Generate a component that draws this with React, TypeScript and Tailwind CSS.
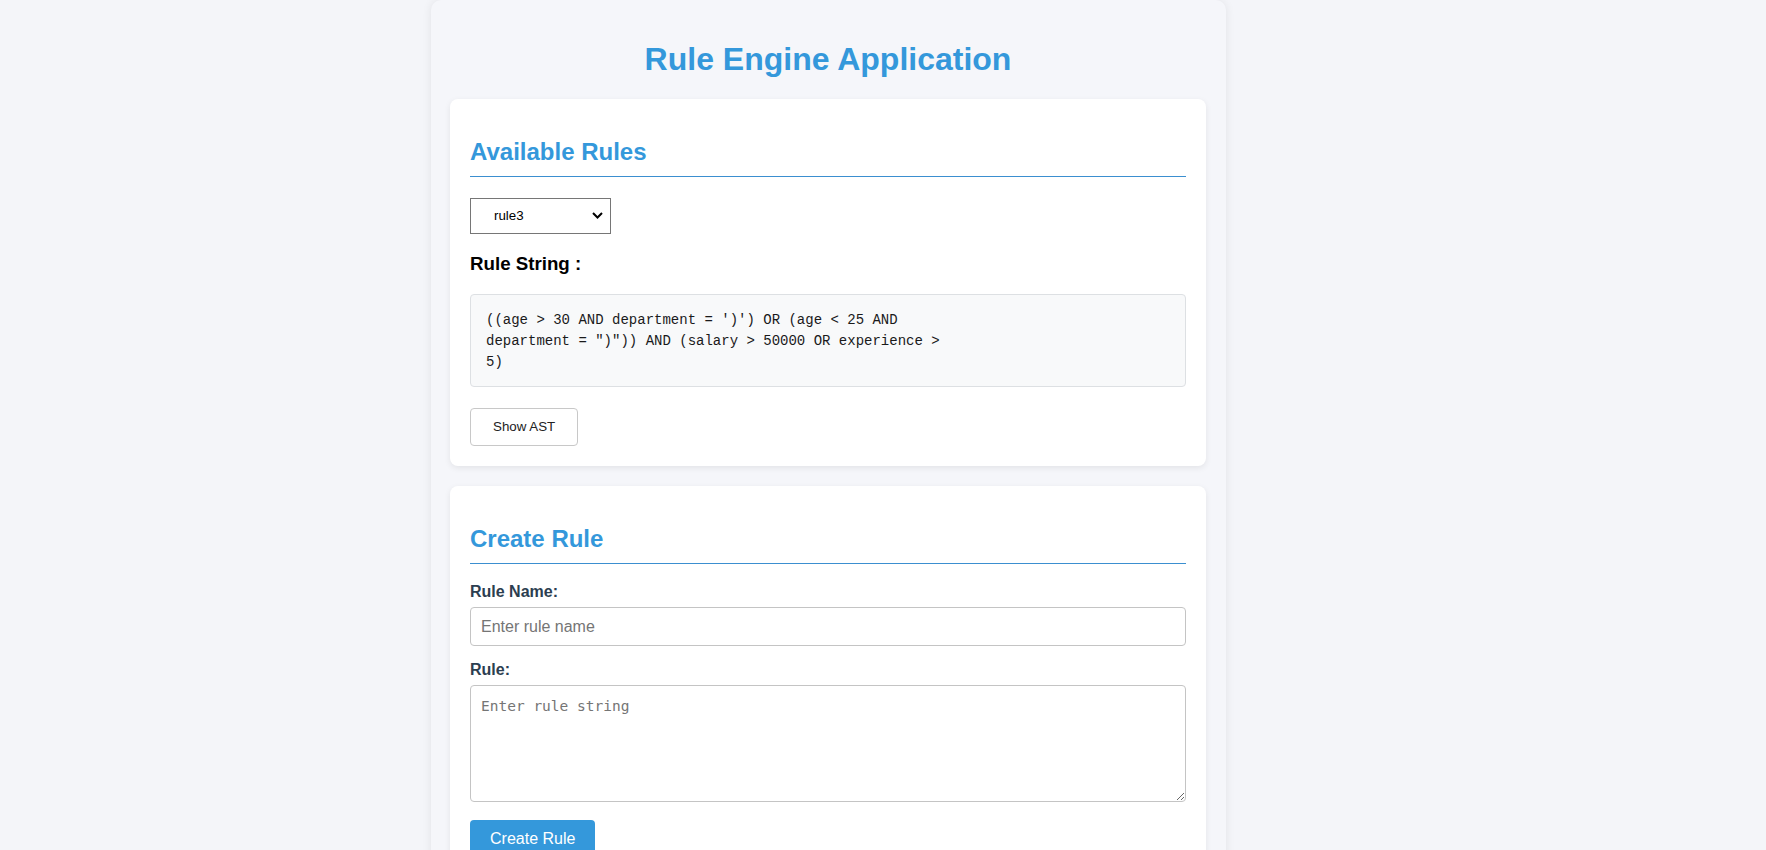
import { useState } from "react";

const rules: Record<string, string[]> = {
  rule1: ["((age > 30 AND department = 'Sales') OR (age < 25 AND", "department = 'Marketing')) AND (salary > 50000 OR", "experience > 5)"],
  rule2: ["((age > 30 AND department = 'Marketing')) AND (salary >", "20000 OR experience > 5)"],
  rule3: [
    "((age > 30 AND department = ')') OR (age < 25 AND",
    "department = \")\")) AND (salary > 50000 OR experience >",
    "5)",
  ],
};

export default function App() {
  const [selected, setSelected] = useState("rule3");
  const [ruleName, setRuleName] = useState("");
  const [ruleString, setRuleString] = useState("");

  return (
    <div className="min-h-screen bg-[#f4f5f9] font-['Liberation_Sans',Arial,sans-serif]">
      <div className="ml-[431px] w-[795px] min-h-screen rounded-[10px] bg-[#f5f6fa] pl-[19px] pr-[20px] pt-[41px] pb-5 shadow-[0_0_10px_rgba(0,0,0,0.08)]">
        <h1 className="mb-[21px] text-center text-[32px] font-bold leading-[37px] text-[#3498db]">
          Rule Engine Application
        </h1>

        {/* available rules */}
        <div className="rounded-lg bg-white p-5 shadow-[0_2px_6px_rgba(0,0,0,0.08)]">
          <h2 className="mt-[19px] mb-[21px] border-b border-[#3b8fd0] pb-[10px] text-[24px] font-bold leading-[28px] text-[#3498db]">
            Available Rules
          </h2>

          <div className="relative h-[36px] w-[141px]">
            <select
              value={selected}
              onChange={(e) => setSelected(e.target.value)}
              className="h-full w-full appearance-none border border-[#767676] bg-white pl-[23px] text-[13.33px] text-black outline-none"
            >
              <option value="rule1">rule1</option>
              <option value="rule2">rule2</option>
              <option value="rule3">rule3</option>
            </select>
            <svg
              className="pointer-events-none absolute right-[8px] top-[14px]"
              width="11"
              height="7"
              viewBox="0 0 11 7"
              fill="none"
            >
              <path d="M1 1L5.5 5.5L10 1" stroke="#000" strokeWidth="2" />
            </svg>
          </div>

          <h3 className="mt-[19px] mb-[19px] text-[18.72px] font-bold leading-[22px] text-black">
            Rule String :
          </h3>

          <div className="rounded border border-[#dde0e3] bg-[#f8f9fa] px-[15px] pt-[15px] pb-[13px] font-['Liberation_Mono','Courier_New',monospace] text-[14px] leading-[21px] text-[#1a1a1a]">
            {rules[selected].map((line, i) => (
              <div key={i} className="whitespace-pre">
                {line}
              </div>
            ))}
          </div>

          <button className="mt-[21px] rounded border border-[#c8c8c8] bg-white px-[22px] py-[10px] text-[13.33px] leading-[16px] text-[#222]">
            Show AST
          </button>
        </div>

        {/* create rule */}
        <div className="mt-5 rounded-lg bg-white p-5 shadow-[0_2px_6px_rgba(0,0,0,0.08)]">
          <h2 className="mt-[19px] mb-[19px] border-b border-[#3b8fd0] pb-[10px] text-[24px] font-bold leading-[28px] text-[#3498db]">
            Create Rule
          </h2>

          <label className="mb-[6px] block text-[16px] font-bold leading-[18px] text-[#2c3e50]">
            Rule Name:
          </label>
          <input
            type="text"
            value={ruleName}
            onChange={(e) => setRuleName(e.target.value)}
            placeholder="Enter rule name"
            className="mb-[15px] block h-[39px] w-full rounded border border-[#c4c4c4] px-[10px] text-[16px] text-black outline-none placeholder:text-[#757575]"
          />

          <label className="mb-[6px] block text-[16px] font-bold leading-[18px] text-[#2c3e50]">
            Rule:
          </label>
          <textarea
            value={ruleString}
            onChange={(e) => setRuleString(e.target.value)}
            placeholder="Enter rule string"
            className="mb-[18px] block h-[117px] w-full rounded border border-[#c4c4c4] p-[10px] font-['DejaVu_Sans_Mono',monospace] text-[14.5px] leading-[20px] text-black outline-none placeholder:text-[#757575]"
          />

          <button className="rounded bg-[#3498db] px-5 py-[10px] text-[16px] leading-[18px] text-white">
            Create Rule
          </button>
        </div>
      </div>
    </div>
  );
}
